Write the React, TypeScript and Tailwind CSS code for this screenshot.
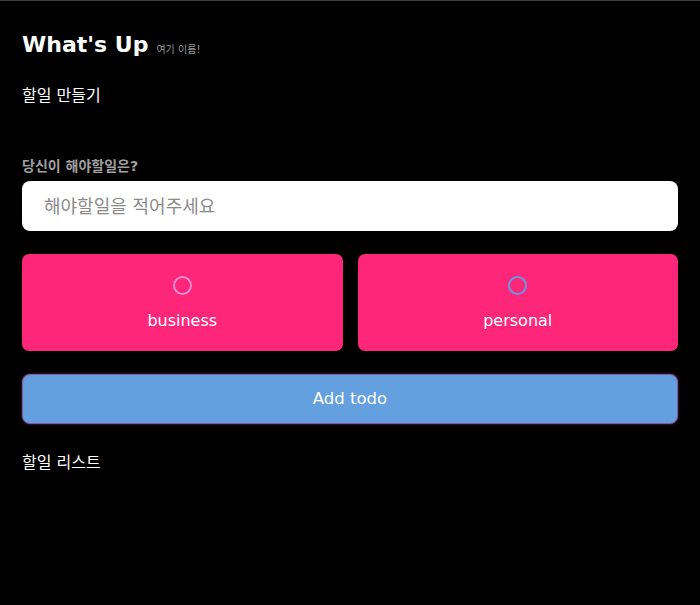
import React from "react";

export default function App() {
  return (
    <div className="min-h-[605px] w-[700px] bg-black border-t border-[#3c3c3c] text-white px-[22px] pt-[30px] font-['DejaVu_Sans','Noto_Sans_CJK_KR',sans-serif]">
      <div className="flex items-end gap-[8px]">
        <h1 className="text-[22px] leading-[28px] font-bold">What&apos;s Up</h1>
        <span className="text-[10px] leading-[14px] text-[#9a9a9a] mb-[2px]">여기 이름!</span>
      </div>
      <div className="mt-[26px] text-[16px] leading-[22px]">할일 만들기</div>
      <form className="mt-[50px]" onSubmit={(e) => e.preventDefault()}>
        <div className="text-[14px] leading-[18px] font-bold text-[#a0a0a0]">당신이 해야할일은?</div>
        <input
          className="mt-[6px] w-full h-[50px] rounded-[8px] bg-white px-[22px] text-[18px] text-black placeholder:text-[#8a8a8a] outline-none"
          placeholder="해야할일을 적어주세요"
        />
        <div className="mt-[23px] grid grid-cols-2 gap-[15px]">
          <label className="h-[97px] rounded-[7px] bg-[#fd2679] flex flex-col items-center pt-[22px]">
            <span className="w-[19px] h-[19px] rounded-full border-2 border-[#f58ad0]" />
            <span className="mt-[16px] text-[16px] leading-[20px] font-medium">business</span>
          </label>
          <label className="h-[97px] rounded-[7px] bg-[#fd2679] flex flex-col items-center pt-[22px]">
            <span className="w-[19px] h-[19px] rounded-full border-2 border-[#6a96e0]" />
            <span className="mt-[16px] text-[16px] leading-[20px] font-medium">personal</span>
          </label>
        </div>
        <button
          type="submit"
          className="mt-[23px] w-full h-[50px] rounded-[8px] bg-[#649fe0] border border-[#7a5aa0] shadow-[0_0_2px_#a03a80] text-[16.5px] text-white font-medium"
        >
          Add todo
        </button>
      </form>
      <div className="mt-[28px] text-[16px] leading-[22px]">할일 리스트</div>
    </div>
  );
}
